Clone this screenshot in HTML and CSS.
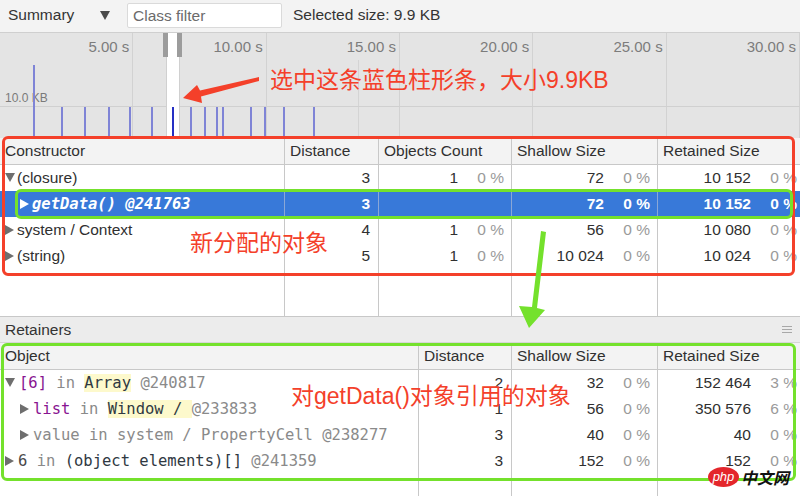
FILE: index.html
```html
<!DOCTYPE html>
<html>
<head>
<meta charset="utf-8">
<link rel="stylesheet" href="styles.css">
</head>
<body>
<div class="app">
  <div class="toolbar">
    <span class="view-select">Summary</span>
    <span class="dropdown"></span>
    <div class="filter">Class filter</div>
    <span class="selected-size">Selected size: 9.9 KB</span>
  </div>

  <div class="timeline">
    <div class="tick"><span>5.00 s</span></div>
    <div class="tick"><span>10.00 s</span></div>
    <div class="tick"><span>15.00 s</span></div>
    <div class="tick"><span>20.00 s</span></div>
    <div class="tick"><span>25.00 s</span></div>
    <div class="tick"><span>30.00 s</span></div>
    <div class="rec-end"></div>
    <div class="baseline"></div>
    <span class="kb-label">10.0 KB</span>
    <div class="selection"></div>
    <div class="handle handle-l"></div>
    <div class="handle handle-r"></div>
    <div class="bar tall" style="left:33px"></div>
    <div class="bar" style="left:61px"></div>
    <div class="bar" style="left:84px"></div>
    <div class="bar" style="left:108px"></div>
    <div class="bar" style="left:129px"></div>
    <div class="bar" style="left:151px"></div>
    <div class="bar current" style="left:172px"></div>
    <div class="bar" style="left:190px"></div>
    <div class="bar" style="left:204px"></div>
    <div class="bar" style="left:216px"></div>
    <div class="bar" style="left:222px"></div>
    <div class="bar" style="left:250px"></div>
    <div class="bar" style="left:264px"></div>
    <div class="bar" style="left:283px"></div>
    <div class="bar" style="left:313px"></div>
  </div>

  <div class="table t1">
    <div class="row head">
      <div class="cell">Constructor</div>
      <div class="cell">Distance</div>
      <div class="cell">Objects Count</div>
      <div class="cell">Shallow Size</div>
      <div class="cell">Retained Size</div>
    </div>
    <div class="row">
      <div class="cell name"><i class="tri down"></i>(closure)</div>
      <div class="cell num">3</div>
      <div class="cell val"><span>1</span><span class="pct">0 %</span></div>
      <div class="cell val"><span>72</span><span class="pct">0 %</span></div>
      <div class="cell val"><span>10 152</span><span class="pct">0 %</span></div>
    </div>
    <div class="row selected">
      <div class="cell name child"><i class="tri right"></i><span class="mono">getData() @241763</span></div>
      <div class="cell num">3</div>
      <div class="cell val"></div>
      <div class="cell val"><span>72</span><span class="pct">0 %</span></div>
      <div class="cell val"><span>10 152</span><span class="pct">0 %</span></div>
    </div>
    <div class="row">
      <div class="cell name"><i class="tri right"></i>system / Context</div>
      <div class="cell num">4</div>
      <div class="cell val"><span>1</span><span class="pct">0 %</span></div>
      <div class="cell val"><span>56</span><span class="pct">0 %</span></div>
      <div class="cell val"><span>10 080</span><span class="pct">0 %</span></div>
    </div>
    <div class="row">
      <div class="cell name"><i class="tri right"></i>(string)</div>
      <div class="cell num">5</div>
      <div class="cell val"><span>1</span><span class="pct">0 %</span></div>
      <div class="cell val"><span>10 024</span><span class="pct">0 %</span></div>
      <div class="cell val"><span>10 024</span><span class="pct">0 %</span></div>
    </div>
    <div class="row filler">
      <div class="cell"></div><div class="cell"></div><div class="cell"></div><div class="cell"></div><div class="cell"></div>
    </div>
  </div>

  <div class="retainers-bar">
    <span>Retainers</span>
    <span class="menu"><i></i><i></i><i></i></span>
  </div>

  <div class="table t2">
    <div class="row head">
      <div class="cell">Object</div>
      <div class="cell">Distance</div>
      <div class="cell">Shallow Size</div>
      <div class="cell">Retained Size</div>
    </div>
    <div class="row">
      <div class="cell name mono-cell"><i class="tri down"></i><span class="prop">[6]</span> <span class="dim">in</span> <span class="hl">Array</span> <span class="dim">@240817</span></div>
      <div class="cell num">2</div>
      <div class="cell val"><span>32</span><span class="pct">0 %</span></div>
      <div class="cell val"><span>152 464</span><span class="pct">3 %</span></div>
    </div>
    <div class="row">
      <div class="cell name child mono-cell"><i class="tri right"></i><span class="prop">list</span> <span class="dim">in</span> <span class="hl">Window / </span><span class="dim">@233833</span></div>
      <div class="cell num">1</div>
      <div class="cell val"><span>56</span><span class="pct">0 %</span></div>
      <div class="cell val"><span>350 576</span><span class="pct">6 %</span></div>
    </div>
    <div class="row">
      <div class="cell name child mono-cell dim"><i class="tri right"></i>value in system / PropertyCell @238277</div>
      <div class="cell num">3</div>
      <div class="cell val"><span>40</span><span class="pct">0 %</span></div>
      <div class="cell val"><span>40</span><span class="pct">0 %</span></div>
    </div>
    <div class="row">
      <div class="cell name mono-cell"><i class="tri right"></i><span class="idx">6</span> <span class="dim">in</span> (object elements)[] <span class="dim">@241359</span></div>
      <div class="cell num">3</div>
      <div class="cell val"><span>152</span><span class="pct">0 %</span></div>
      <div class="cell val"><span>152</span><span class="pct">0 %</span></div>
    </div>
    <div class="row filler">
      <div class="cell"></div><div class="cell"></div><div class="cell"></div><div class="cell"></div>
    </div>
  </div>
</div>

<div class="overlay">
  <div class="box red-box"></div>
  <div class="box green-box row-box"></div>
  <div class="box green-box ret-box"></div>
  <div class="note note-1">选中这条蓝色柱形条，大小9.9KB</div>
  <div class="note note-2">新分配的对象</div>
  <div class="note note-3">对getData()对象引用的对象</div>
  <svg class="arrows" width="800" height="496" viewBox="0 0 800 496">
    <polygon fill="#f4402a" points="259,77 200,90.5 197,85 183,98 202,103 201,96.5 259,81"/>
    <polygon fill="#74e12c" points="541,231 546,232 537,308 545,310 529,328 519,306 532,307"/>
  </svg>
  <div class="watermark"><span class="php">php</span><span class="cn">中文网</span></div>
</div>
</body>
</html>
```

FILE: styles.css
```css
* { box-sizing: border-box; }

html, body {
  margin: 0;
  padding: 0;
  width: 800px;
  height: 496px;
  overflow: hidden;
  background: #ffffff;
  font-family: "Liberation Sans", Arial, sans-serif;
  font-size: 15.5px;
  color: #303030;
}

.app {
  display: flex;
  flex-direction: column;
  width: 800px;
  height: 496px;
}

/* toolbar */
.toolbar {
  height: 33px;
  flex: none;
  display: flex;
  align-items: center;
  background: #f3f3f3;
  border-bottom: 1px solid #cfcfcf;
  padding-left: 8px;
  padding-bottom: 2px;
}
.view-select { width: 92px; color: #333; }
.dropdown {
  width: 0; height: 0;
  border-left: 5px solid transparent;
  border-right: 5px solid transparent;
  border-top: 9px solid #4a4a4a;
  margin-right: 17px;
  margin-top: 1px;
}
.filter {
  width: 155px;
  height: 25px;
  background: #fff;
  border: 1px solid #dadada;
  border-radius: 2px;
  color: #6b6b6b;
  padding-left: 5px;
  line-height: 23px;
  margin-right: 11px;
}
.selected-size { color: #333; }

/* timeline */
.timeline {
  position: relative;
  height: 105px;
  flex: none;
  display: flex;
  background: #e4e4e4;
  overflow: hidden;
  font-size: 15px;
}
.tick {
  width: 133.33px;
  flex: none;
  border-right: 1px solid #d2d2d2;
  text-align: right;
  padding: 5px 3px 0 0;
  line-height: 18px;
  color: #7c7c7c;
}
.rec-end {
  position: absolute;
  left: 358px;
  top: 27px;
  bottom: 0;
  width: 1px;
  background: #d4d4d4;
}
.baseline {
  position: absolute;
  left: 0; right: 0;
  top: 73px;
  height: 1px;
  background: #d0d0d0;
}
.kb-label {
  position: absolute;
  left: 5px;
  top: 58px;
  font-size: 12px;
  color: #7a7a7a;
}
.selection {
  position: absolute;
  left: 166px;
  width: 14px;
  top: 0; bottom: 0;
  background: #ffffff;
  border-left: 1px solid #d0d0d0;
  border-right: 1px solid #d0d0d0;
}
.handle {
  position: absolute;
  top: 0;
  height: 24px;
  width: 5px;
  background: #9c9c9c;
}
.handle-l { left: 163px; }
.handle-r { left: 177px; }
.bar {
  position: absolute;
  top: 74px;
  bottom: 0;
  width: 2px;
  background: #7f84d6;
}
.bar.tall { top: 32px; }
.bar.current { background: #2630c4; }

/* tables */
.table {
  display: flex;
  flex-direction: column;
  width: 804px;
  flex: none;
}
.t1 { height: 178px; }
.t2 { flex: 1; min-height: 0; }

.row {
  display: grid;
  height: 26px;
  flex: none;
  line-height: 26px;
}
.t1 .row { grid-template-columns: 285px 94px 133px 146px 146px; }
.t2 .row { grid-template-columns: 419px 93px 146px 146px; }

.row.filler { flex: 1; height: auto; }

.cell {
  border-right: 1px solid #c8c8c8;
  white-space: nowrap;
  overflow: hidden;
}
.row .cell:last-child { border-right: none; }

.row.head {
  height: 27px;
  background: #f3f3f3;
  border-bottom: 1px solid #c8c8c8;
  line-height: 25px;
}
.row.head .cell { padding-left: 5px; color: #303030; }

.name { padding-left: 5px; }
.name.child { padding-left: 20px; }

.num { text-align: right; padding-right: 8px; }
.val {
  display: flex;
  justify-content: flex-end;
  padding-right: 7px;
}
.pct {
  width: 46px;
  text-align: right;
  color: #9a9a9a;
}

.tri {
  display: inline-block;
  vertical-align: middle;
  width: 0; height: 0;
  margin-right: 3px;
  margin-top: -2px;
}
.tri.down {
  border-left: 5px solid transparent;
  border-right: 5px solid transparent;
  border-top: 9px solid #6e6e6e;
  margin-right: 2px;
}
.tri.right {
  border-top: 5px solid transparent;
  border-bottom: 5px solid transparent;
  border-left: 9px solid #6e6e6e;
}

.row.selected { background: #3879d9; color: #ffffff; font-weight: bold; }
.row.selected .pct { color: #ffffff; }
.row.selected .tri.right { border-left-color: #ffffff; }
.row.selected .cell { border-right-color: #8aa7d6; }

.mono, .mono-cell {
  font-family: "DejaVu Sans Mono", "Liberation Mono", monospace;
  font-size: 15.5px;
}
.mono { font-style: italic; font-weight: bold; }
.mono-cell { white-space: pre; color: #303942; }
.mono-cell .tri { margin-right: 4px; }
.prop { color: #881391; }
.dim { color: #8a8a8a; }
.hl { background: #fdf9cc; color: #303942; }
.idx { color: #4a4a4a; }

/* retainers bar */
.retainers-bar {
  height: 27px;
  flex: none;
  display: flex;
  align-items: center;
  justify-content: space-between;
  background: #ececec;
  border-top: 1px solid #c8c8c8;
  border-bottom: 1px solid #d6d6d6;
  padding: 0 8px 0 5px;
  color: #333;
}
.menu { display: flex; flex-direction: column; gap: 2px; }
.menu i { display: block; width: 10px; height: 1px; background: #a8a8a8; }

/* annotations */
.overlay {
  position: absolute;
  left: 0; top: 0;
  width: 800px; height: 496px;
  pointer-events: none;
}
.box { position: absolute; border-radius: 6px; }
.red-box {
  left: 2px; top: 136px;
  width: 793px; height: 140px;
  border: 3px solid #f4402a;
}
.green-box { border: 3px solid #74e12c; }
.row-box { left: 15px; top: 189px; width: 778px; height: 30px; }
.ret-box { left: 1px; top: 343px; width: 795px; height: 138px; }

.note {
  position: absolute;
  font-family: "Liberation Sans", "Noto Sans CJK SC", sans-serif;
  font-size: 23px;
  line-height: 30px;
  color: #f4402a;
  white-space: nowrap;
}
.note-1 { left: 270px; top: 65px; }
.note-2 { left: 190px; top: 228px; }
.note-3 { left: 291px; top: 381px; }

.arrows { position: absolute; left: 0; top: 0; }

.watermark {
  position: absolute;
  left: 708px;
  top: 467px;
  display: flex;
  align-items: center;
}
.php {
  width: 31px;
  height: 20px;
  border-radius: 50%;
  background: #e4262b;
  color: #fff;
  font-family: "Liberation Sans", sans-serif;
  font-size: 13px;
  line-height: 19px;
  text-align: center;
  font-style: italic;
}
.cn {
  margin-left: 2px;
  font-family: "Noto Sans CJK SC", sans-serif;
  font-size: 16px;
  font-weight: bold;
  line-height: 20px;
  font-style: italic;
  color: #111;
}
```
